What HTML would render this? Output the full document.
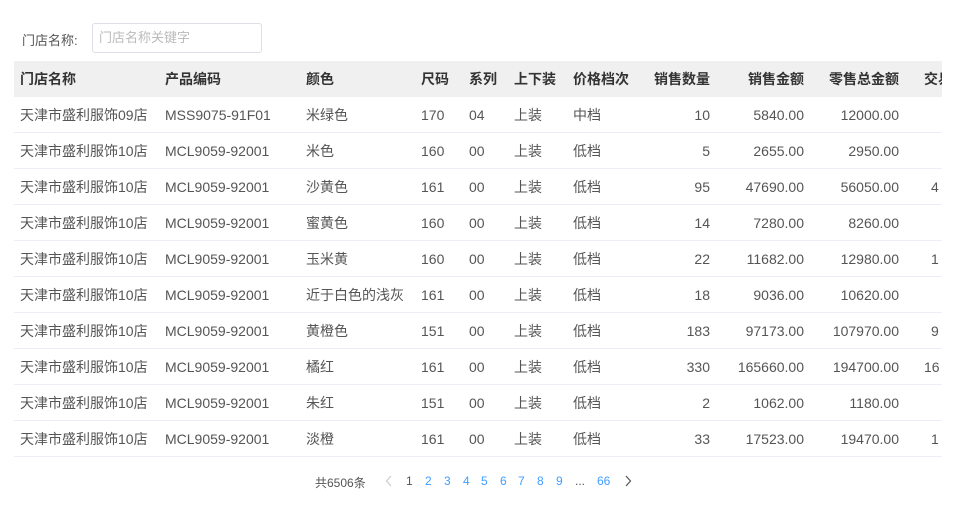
<!DOCTYPE html>
<html><head><meta charset="utf-8"><style>
*{margin:0;padding:0;box-sizing:border-box}
body{width:956px;height:513px;background:#fff;font-family:"Liberation Sans","Noto Sans CJK SC",sans-serif;font-size:14px;color:#555;position:relative;overflow:hidden}
.lbl{position:absolute;left:22px;top:30px;font-size:13px;color:#555}
.inp{position:absolute;left:92px;top:23px;width:170px;height:30px;border:1px solid #dcdfe6;border-radius:3px;font-size:13px;color:#bbb;padding:0 6px;line-height:28px}
.tbl{position:absolute;left:14px;top:61px;width:928px;height:397px;overflow:hidden}
.row{position:absolute;left:0;width:1000px;height:36px;border-bottom:1px solid #ebeef5}
.hd{background:#f0f0f0;font-weight:bold;color:#333;border-bottom:none}
.row span{position:absolute;top:10px;white-space:nowrap;line-height:16px}
.r{text-align:right}
.pg{position:absolute;top:474px;font-size:12px;color:#555}
.b{color:#409eff}
svg.pg{top:475px}
</style></head><body>
<div class="lbl">门店名称:</div>
<div class="inp">门店名称关键字</div>
<div class="tbl" id="t"></div>
<div class="pg" style="left:315px">共6506条</div>
<svg class="pg" style="left:385px" width="8" height="12" viewBox="0 0 8 12"><path d="M6 1L1.5 6L6 11" fill="none" stroke="#ccc" stroke-width="1.2"/></svg>
<div class="pg" style="left:406px">1</div>
<div class="pg b" style="left:425px">2</div>
<div class="pg b" style="left:444px">3</div>
<div class="pg b" style="left:463px">4</div>
<div class="pg b" style="left:481px">5</div>
<div class="pg b" style="left:500px">6</div>
<div class="pg b" style="left:518px">7</div>
<div class="pg b" style="left:537px">8</div>
<div class="pg b" style="left:556px">9</div>
<div class="pg" style="left:575px">...</div>
<div class="pg b" style="left:597px">66</div>
<svg class="pg" style="left:624px" width="8" height="12" viewBox="0 0 8 12"><path d="M2 1L6.5 6L2 11" fill="none" stroke="#555" stroke-width="1.2"/></svg>
<script>
var H=["门店名称","产品编码","颜色","尺码","系列","上下装","价格档次","销售数量","销售金额","零售总金额","交易"];
var D=[
["天津市盛利服饰09店","MSS9075-91F01","米绿色","170","04","上装","中档","10","5840.00","12000.00",""],
["天津市盛利服饰10店","MCL9059-92001","米色","160","00","上装","低档","5","2655.00","2950.00",""],
["天津市盛利服饰10店","MCL9059-92001","沙黄色","161","00","上装","低档","95","47690.00","56050.00","4"],
["天津市盛利服饰10店","MCL9059-92001","蜜黄色","160","00","上装","低档","14","7280.00","8260.00",""],
["天津市盛利服饰10店","MCL9059-92001","玉米黄","160","00","上装","低档","22","11682.00","12980.00","1"],
["天津市盛利服饰10店","MCL9059-92001","近于白色的浅灰","161","00","上装","低档","18","9036.00","10620.00",""],
["天津市盛利服饰10店","MCL9059-92001","黄橙色","151","00","上装","低档","183","97173.00","107970.00","9"],
["天津市盛利服饰10店","MCL9059-92001","橘红","161","00","上装","低档","330","165660.00","194700.00","16"],
["天津市盛利服饰10店","MCL9059-92001","朱红","151","00","上装","低档","2","1062.00","1180.00",""],
["天津市盛利服饰10店","MCL9059-92001","淡橙","161","00","上装","低档","33","17523.00","19470.00","1"]];
var L=[6,151,292,407,455,500,559],R=[696,790,885];
function row(c,top,cls){var h='<div class="row '+cls+'" style="top:'+top+'px">';
for(var i=0;i<7;i++)h+='<span style="left:'+L[i]+'px">'+c[i]+'</span>';
for(var j=0;j<3;j++)h+='<span class="r" style="right:'+(1000-R[j])+'px">'+c[7+j]+'</span>';
if(cls)h+='<span style="left:910px">'+c[10]+'</span>';else h+='<span style="left:'+(c[10].length>1?910:917)+'px">'+c[10]+'</span>';
return h+'</div>';}
var s=row(H,0,'hd');for(var k=0;k<10;k++)s+=row(D[k],36+k*36,'');
document.getElementById('t').innerHTML=s;
</script>
</body></html>
